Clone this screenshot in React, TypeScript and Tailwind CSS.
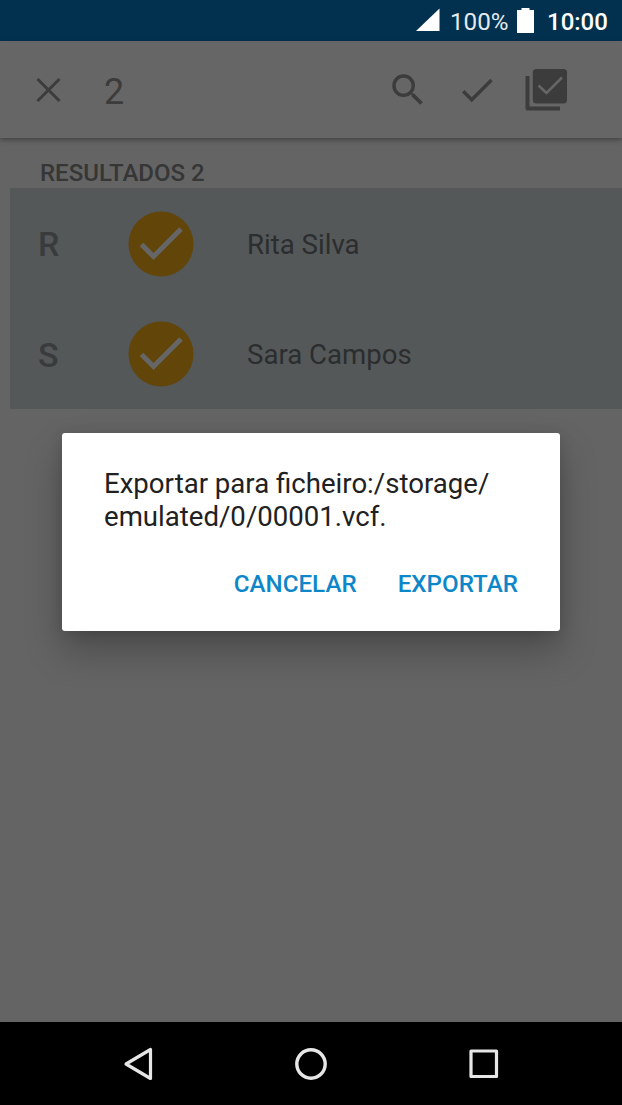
type Contact = { letter: string; name: string };

const contacts: Contact[] = [
  { letter: "R", name: "Rita Silva" },
  { letter: "S", name: "Sara Campos" },
];

function StatusBar() {
  return (
    <header className="flex h-[41px] shrink-0 items-center justify-end bg-[#02314f] pr-[14px] text-[24.2px] leading-[28px] text-white">
      <svg width="24" height="24" viewBox="0 0 24 24" className="mt-[-2px]">
        <path d="M23.500 0.500v22.500H0z" fill="#fff" />
      </svg>
      <span className="ml-[10px] mt-[3px] w-[59px] whitespace-nowrap text-[#e4eaee]">100%</span>
      <svg width="17" height="25" viewBox="0 0 17 25" className="ml-[8px]">
        <path d="M4.5 0h8v2H17v23H0V2h4.5z" fill="#fff" />
      </svg>
      <span className="ml-[13px] mt-[3px] w-[61px] whitespace-nowrap text-[24px] font-medium">10:00</span>
    </header>
  );
}

function Toolbar() {
  return (
    <div className="relative flex h-[97px] shrink-0 items-center bg-[#666] text-[#3c3c3c] shadow-[0_2px_5px_rgba(0,0,0,0.34)]">
      <svg width="26" height="26" viewBox="0 0 26 26" className="ml-[35px] mt-px">
        <path d="M2.500 2l22 22M24.500 2l-22 22" stroke="currentColor" strokeWidth="3" fill="none" />
      </svg>
      <span className="ml-[43px] mt-[4px] text-[36px] leading-[40px]">2</span>
      <div className="ml-auto flex items-center pr-[54px]">
        <svg width="42" height="42" viewBox="0 0 24 24" fill="currentColor">
          <path d="M15.5 14h-.79l-.28-.27A6.47 6.47 0 0 0 16 9.5 6.5 6.5 0 1 0 9.5 16c1.61 0 3.09-.59 4.23-1.57l.27.28v.79l5 4.99L20.49 19l-4.99-5zm-6 0C7.01 14 5 11.99 5 9.5S7.01 5 9.5 5 14 7.01 14 9.5 11.99 14 9.5 14z" />
        </svg>
        <svg width="42" height="42" viewBox="0 0 24 24" className="ml-[27px]" fill="currentColor">
          <path d="M9 16.17L4.83 12l-1.42 1.41L9 19 21 7l-1.41-1.41z" />
        </svg>
        <svg width="43" height="43" viewBox="0 0 43 43" className="ml-[27px]">
          <path d="M2.500 8v32.400h32.500" fill="none" stroke="currentColor" strokeWidth="4" strokeLinejoin="round" />
          <rect x="7.800" y="1" width="34.200" height="34.500" rx="3.5" fill="currentColor" />
          <path d="M13.500 17.500l8 7.500L37 9.500" fill="none" stroke="#666" strokeWidth="2.500" />
        </svg>
      </div>
    </div>
  );
}

function ContactRow({ letter, name }: Contact) {
  return (
    <li className="flex h-[110.500px] items-center">
      <span className="ml-[28px] mt-[2px] w-[90px] text-[34px] font-medium leading-[40px] text-[#393b3c]">{letter}</span>
      <svg width="66" height="66" viewBox="0 0 66 66" className="mt-px">
        <circle cx="33" cy="33" r="32.5" fill="#614509" />
        <path d="M13.500 33.500L25.500 45.500L53 18" fill="none" stroke="#666" strokeWidth="5" />
      </svg>
      <span className="ml-[53px] mt-[3px] text-[27.600px] leading-[34px] text-[#2b2d2e]">{name}</span>
    </li>
  );
}

function ExportDialog() {
  return (
    <div
      role="dialog"
      className="absolute left-[62px] top-[433px] flex h-[198px] w-[498px] flex-col rounded-[3px] bg-white px-[42px] pt-[34px] shadow-[0_20px_36px_rgba(0,0,0,0.25),0_2px_14px_rgba(0,0,0,0.12)]"
    >
      <p className="whitespace-nowrap text-[27.6px] leading-[33px] text-[#212121]">
        Exportar para ficheiro:/storage/
        <br />
        emulated/0/00001.vcf.
      </p>
      <div className="mt-[36px] flex justify-end gap-[41px] text-[24.2px] font-medium leading-[30px] text-[#0e87c9]">
        <button>CANCELAR</button>
        <button>EXPORTAR</button>
      </div>
    </div>
  );
}

function NavigationBar() {
  return (
    <nav className="flex h-[83px] shrink-0 items-center justify-between bg-black pl-[122px] pr-[122px]">
      <svg width="34" height="34" viewBox="0 0 34 34" fill="none" stroke="#e6e6e6" strokeWidth="3.200" strokeLinejoin="round">
        <path d="M28.500 2.500v29L4 17z" />
      </svg>
      <svg width="34" height="34" viewBox="0 0 34 34" fill="none" stroke="#e6e6e6" strokeWidth="3.400">
        <circle cx="17" cy="17" r="14.200" />
      </svg>
      <svg width="34" height="34" viewBox="0 0 34 34" fill="none" stroke="#e6e6e6" strokeWidth="3.200" strokeLinejoin="round">
        <rect x="5" y="4" width="25.500" height="25.500" />
      </svg>
    </nav>
  );
}

export default function App() {
  return (
    <div className="relative flex h-[1105px] w-[622px] flex-col overflow-hidden bg-[#646464] font-['Roboto',sans-serif]">
      <StatusBar />
      <Toolbar />
      <main className="flex-1 pt-[20px]">
        <h2 className="ml-[40px] h-[30px] text-[24px] font-medium leading-[30px] text-[#363636]">RESULTADOS 2</h2>
        <ul className="ml-[10px] bg-[#545859]">
          {contacts.map((contact) => (
            <ContactRow key={contact.letter} {...contact} />
          ))}
        </ul>
      </main>
      <NavigationBar />
      <ExportDialog />
    </div>
  );
}
